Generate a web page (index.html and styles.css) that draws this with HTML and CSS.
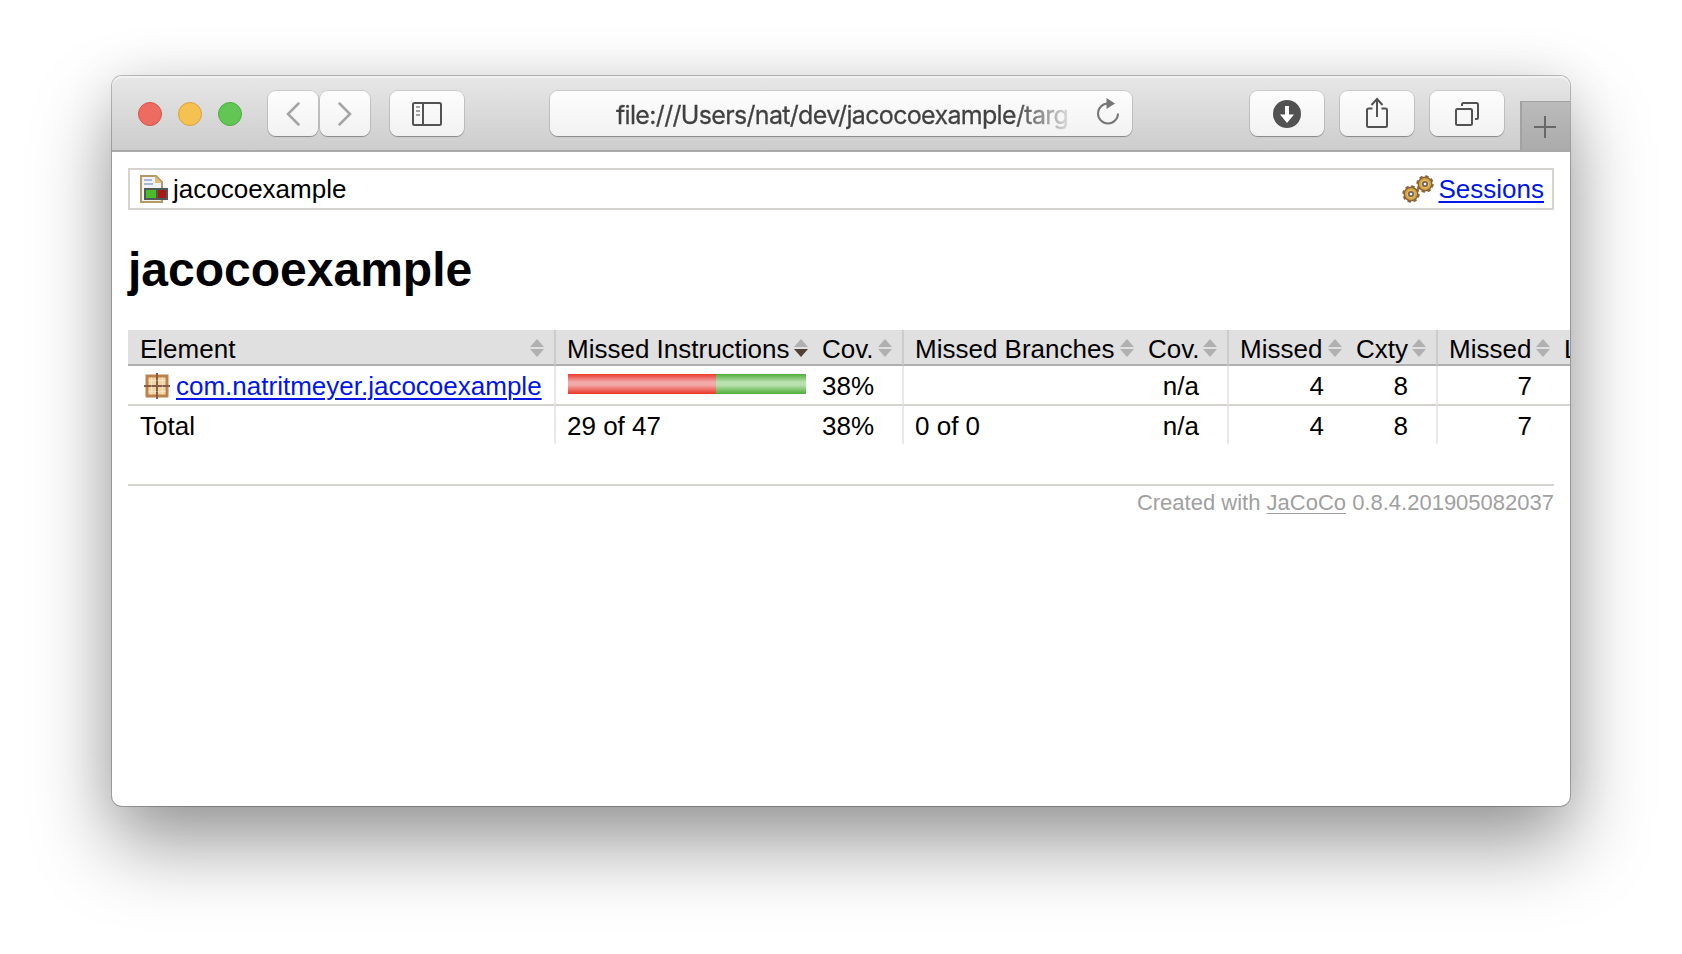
FILE: index.html
```html
<!DOCTYPE html>
<html lang="en">
<head>
<meta charset="utf-8">
<title>jacocoexample</title>
<link rel="stylesheet" href="styles.css">
</head>
<body>
<svg class="defs" width="0" height="0">
  <defs>
    <symbol id="sort" viewBox="0 0 14 18"><path d="M7 0 14 8H0ZM0 10H14L7 18Z" fill="#b0b0b0"/></symbol>
    <symbol id="sort-down" viewBox="0 0 14 18"><path d="M7 0 14 8H0Z" fill="#b0b0b0"/><path d="M0 10H14L7 18Z" fill="#4f4033"/></symbol>
    <symbol id="gear" viewBox="-9 -9 18 18">
      <circle r="7.400" fill="none" stroke="#8a6844" stroke-width="2.600" stroke-dasharray="3.300 2.510"/>
      <circle r="6.800" fill="#d6a646" stroke="#8a6234" stroke-width="1.400"/>
      <circle r="4.200" fill="#e3bd60"/>
      <circle r="2.200" fill="#eee" stroke="#77665c" stroke-width="1.800"/>
    </symbol>
  </defs>
</svg>
<main class="window">
  <header class="toolbar">
    <div class="lights"><i class="light red"></i><i class="light yellow"></i><i class="light green"></i></div>
    <div class="nav">
      <div class="btn small"><svg width="14" height="24" viewBox="0 0 14 24"><path d="M12.5 1.5 2 12l10.500 10.500" fill="none" stroke="#a4a4a4" stroke-width="2.500" stroke-linecap="round"/></svg></div>
      <div class="btn small"><svg width="14" height="24" viewBox="0 0 14 24"><path d="M1.500 1.500 12 12 1.500 22.500" fill="none" stroke="#a4a4a4" stroke-width="2.500" stroke-linecap="round"/></svg></div>
    </div>
    <div class="btn sidebar"><svg width="30" height="24" viewBox="0 0 30 24" fill="none" stroke="#525252" stroke-width="2"><rect x="1" y="1" width="28" height="22" rx="1.500"/><path d="M11 1v22"/><path d="M4 5h4M4 9h4M4 13h4" stroke="#858585" stroke-width="1.600"/></svg></div>
    <div class="address">
      <span class="url">file:///Users/nat/dev/jacocoexample/targ</span>
      <svg class="reload" width="24" height="28" viewBox="0 0 24 28"><path d="M12 5.500A10 10 0 1 0 22 15.500" fill="none" stroke="#777" stroke-width="2"/><path d="M10.500 0v11l8.500-5.500z" fill="#777"/></svg>
    </div>
    <div class="actions">
      <div class="btn"><svg width="28" height="28" viewBox="0 0 28 28"><circle cx="14" cy="14" r="14" fill="#525252"/><path d="M12 6h4v8.500h5L14 23l-7-8.500h5z" fill="#fff"/></svg></div>
      <div class="btn"><svg class="share" width="24" height="32" viewBox="0 0 24 32" fill="none" stroke="#525252" stroke-width="2"><path d="M7.500 11.500H3.500Q2 11.500 2 13v15.500Q2 30 3.500 30h17q1.500 0 1.500-1.500V13q0-1.500-1.500-1.500h-4M12 20V2M6.500 8 12 2l5.500 6"/></svg></div>
      <div class="btn"><svg width="24" height="24" viewBox="0 0 24 24" fill="none" stroke="#525252" stroke-width="2"><rect x="1" y="7" width="16" height="16" rx="1.500"/><path d="M7 4V2.500Q7 1 8.500 1h13Q23 1 23 2.500v13q0 1.500-1.500 1.500H20"/></svg></div>
    </div>
    <div class="newtab"><svg width="22" height="22" viewBox="0 0 22 22"><path d="M11 0v22M0 11h22" stroke="#686868" stroke-width="2"/></svg></div>
  </header>
  <section class="page">
    <nav class="breadcrumb">
      <span class="crumb"><svg width="28" height="28" viewBox="0 0 28 28">
        <path d="M1 1H16L22 7V27H1Z" fill="#edf3f8" stroke="#b49a60" stroke-width="2"/><path d="M15 1v7h7z" fill="#dfbc73"/>
        <path d="M4 5h8M4 9h9" stroke="#a8b9d6" stroke-width="2"/>
        <path d="M4 13h24v12H4z" fill="#50585a"/><path d="M6 15h10v8H6z" fill="#4bbb27"/><path d="M18 15h8v8h-8z" fill="#a91a15"/></svg>jacocoexample</span>
      <span class="crumb"><svg width="32" height="28" viewBox="0 0 32 28"><use href="#gear" x="0" y="10" width="18" height="18"/><use href="#gear" x="14" y="0" width="18" height="18"/></svg><a>Sessions</a></span>
    </nav>
    <h1>jacocoexample</h1>
    <table class="coverage">
      <colgroup><col class="c-element"><col class="c-instr"><col class="c-cov"><col class="c-branch"><col class="c-cov2"><col class="c-missed"><col class="c-cov"><col class="c-missed2"><col class="c-lines"></colgroup>
      <thead><tr>
        <td>Element<svg class="sort"><use href="#sort"/></svg></td>
        <td class="bar">Missed Instructions<svg class="sort"><use href="#sort-down"/></svg></td>
        <td class="ctr2">Cov.<svg class="sort"><use href="#sort"/></svg></td>
        <td class="bar">Missed Branches<svg class="sort"><use href="#sort"/></svg></td>
        <td class="ctr2">Cov.<svg class="sort"><use href="#sort"/></svg></td>
        <td class="bar">Missed<svg class="sort"><use href="#sort"/></svg></td>
        <td class="ctr2">Cxty<svg class="sort"><use href="#sort"/></svg></td>
        <td class="bar">Missed<svg class="sort"><use href="#sort"/></svg></td>
        <td class="ctr2">Lines</td>
      </tr></thead>
      <tbody>
        <tr>
          <td><span class="package"><svg width="26" height="26" viewBox="0 0 26 26"><rect x="3" y="3" width="20" height="20" fill="#f1d6a5" stroke="#bd824b" stroke-width="3"/><path d="M13 0v26M0 13h26" stroke="#875b45" stroke-width="2"/><path d="M7.500 4v18M18.500 4v18M4 7.500h18M4 18.500h18" stroke="#fff" stroke-opacity=".3"/></svg><a>com.natritmeyer.jacocoexample</a></span></td>
          <td class="bar"><div class="meter"><i class="miss"></i><i class="hit"></i></div></td>
          <td class="ctr2">38%</td><td class="bar"></td><td class="ctr2">n/a</td>
          <td class="bar ctr1">4</td><td class="ctr2">8</td><td class="bar ctr1">7</td><td></td>
        </tr>
        <tr class="total">
          <td>Total</td><td class="bar">29 of 47</td><td class="ctr2">38%</td><td class="bar">0 of 0</td><td class="ctr2">n/a</td>
          <td class="bar ctr1">4</td><td class="ctr2">8</td><td class="bar ctr1">7</td><td></td>
        </tr>
      </tbody>
    </table>
    <footer>Created with <a>JaCoCo</a> 0.8.4.201905082037</footer>
  </section>
</main>
</body>
</html>
```
FILE: styles.css
```css
* { box-sizing: border-box; }
html, body { height: 100%; }
body {
  margin: 0;
  padding: 76px 111px 0 112px;
  background: #fff;
  color: #000;
  font-family: "Liberation Sans", Arial, sans-serif;
  font-size: 26px;
  overflow: hidden;
}
svg { display: block; flex: none; }
.defs { position: absolute; }
.window {
  width: 1458px;
  height: 730px;
  border-radius: 10px;
  background: #fff;
  box-shadow: 0 0 0 1px rgba(0,0,0,.24), 0 38px 80px rgba(0,0,0,.4), 0 0 50px rgba(0,0,0,.08);
}
.toolbar {
  display: flex;
  align-items: flex-start;
  height: 76px;
  padding: 15px 0 0 26px;
  border-radius: 10px 10px 0 0;
  border-bottom: 2px solid #a9a9a9;
  background: linear-gradient(#e7e7e7, #cdcdcd);
  box-shadow: inset 0 2px #f1f1f1;
}
.lights { display: flex; gap: 16px; padding-top: 11px; }
.light { width: 24px; height: 24px; border-radius: 50%; border: 1px solid; }
.red { background: #ed6b60; border-color: #d65549; }
.yellow { background: #f5c150; border-color: #d9a13c; }
.green { background: #62c655; border-color: #4fac42; }
.btn {
  display: flex;
  align-items: center;
  justify-content: center;
  width: 74px;
  height: 45px;
  border-radius: 8px;
  background: linear-gradient(#fdfdfd, #f2f2f2);
  box-shadow: 0 0 0 1px rgba(0,0,0,.1), 0 1px 1px rgba(0,0,0,.28);
}
.nav { display: flex; gap: 2px; margin-left: 26px; }
.btn.small { width: 50px; }
.sidebar { margin-left: 20px; }
.address {
  display: flex;
  align-items: center;
  justify-content: space-between;
  width: 582px;
  height: 45px;
  margin-left: 86px;
  padding: 0 12px 0 66px;
  border-radius: 8px;
  background: linear-gradient(#fdfdfd, #f2f2f2);
  box-shadow: 0 0 0 1px rgba(0,0,0,.1), 0 1px 1px rgba(0,0,0,.28);
}
.url {
  font: 25px/32px Inter, sans-serif;
  letter-spacing: -.67px;
  white-space: nowrap;
  padding-top: 3px;
  color: transparent;
  -webkit-text-stroke: .3px transparent;
  background: linear-gradient(90deg, #404040 88%, #d8d8d8);
  background-clip: text;
  -webkit-background-clip: text;
}
.reload { margin-top: -3px; }
.actions { display: flex; gap: 16px; margin-left: 118px; }
.share { margin-top: -2px; }
.newtab {
  display: flex;
  align-items: center;
  justify-content: center;
  width: 50px;
  height: 49px;
  margin: 10px 0 0 auto;
  padding: 2px 2px 0 0;
  border: solid #a2a2a2;
  border-width: 1px 0 0 2px;
  background: linear-gradient(#bbb, #ababab);
}
.page { padding: 16px; overflow: hidden; }
a { color: #0016e8; text-decoration: underline; text-decoration-thickness: 2px; text-underline-offset: 3px; text-decoration-skip-ink: auto; }
.breadcrumb {
  display: flex;
  justify-content: space-between;
  align-items: center;
  height: 42px;
  padding: 0 8px 0 10px;
  border: 2px solid #d6d3ce;
}
.crumb { display: flex; align-items: center; gap: 5px; }
h1 { margin: 32px 0; font-size: 48px; line-height: 56px; font-weight: bold; }
.coverage { width: 1516px; table-layout: fixed; border-collapse: separate; border-spacing: 0; }
.c-element { width: 426px; }
.c-instr { width: 264px; }
.c-cov { width: 84px; }
.c-branch { width: 242px; }
.c-cov2 { width: 83px; }
.c-missed { width: 125px; }
.c-missed2 { width: 124px; }
.c-lines { width: 84px; }
td { height: 40px; padding: 2px 12px 0; line-height: 30px; white-space: nowrap; border-bottom: 2px solid #d6d3ce; }
td.bar { padding-left: 11px; border-left: 2px solid #e8e8e8; }
td.ctr2 { padding: 2px 28px 0 4px; text-align: right; }
td.ctr1 { padding-right: 28px; text-align: right; }
thead td, thead td.ctr2 { position: relative; height: 36px; padding-top: 4px; background: #e0e0e0; border-bottom-color: #b0b0b0; text-align: left; }
thead td.ctr2 { padding-right: 0; }
thead td.bar { border-left-color: #ccc; }
.sort { position: absolute; right: 10px; top: 9px; width: 14px; height: 18px; }
.total td { height: 38px; border-bottom: 0; }
.package { display: flex; align-items: center; gap: 6px; padding-left: 4px; margin-top: -1px; }
.meter { display: flex; width: 238px; height: 20px; margin: -5px 0 0 1px; }
.miss { width: 148px; background: linear-gradient(#ea3a2f, #f3aaaa 40%, #f3aaaa 55%, #ea3326); }
.hit { width: 90px; background: linear-gradient(#50ac39, #b9e1b0 40%, #b9e1b0 55%, #4fab35); }
footer { margin-top: 40px; padding-top: 4px; border-top: 2px solid #d6d3ce; color: #a0a0a0; font-size: 22px; line-height: 26px; text-align: right; }
footer a { color: inherit; text-decoration-thickness: 1px; text-underline-offset: 3px; }
```
